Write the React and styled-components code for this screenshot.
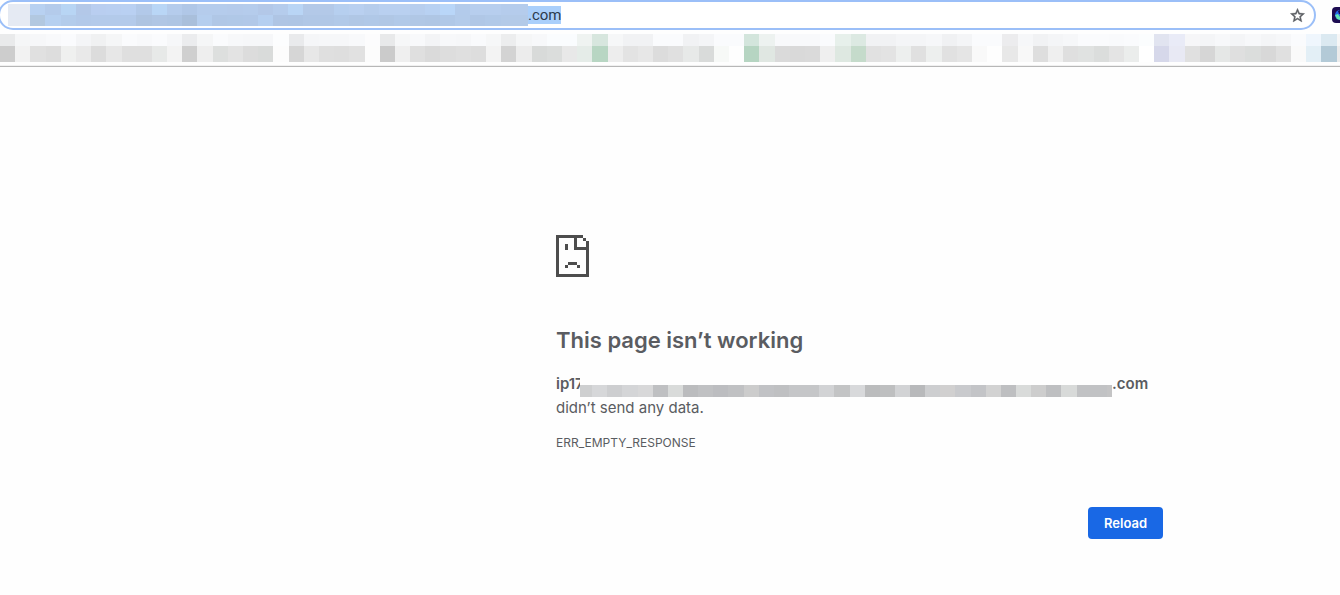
import React from 'react';
import styled, { createGlobalStyle } from 'styled-components';
import { MdStarBorder } from 'react-icons/md';

const GlobalStyle = createGlobalStyle`
  * {
    box-sizing: border-box;
  }

  body {
    margin: 0;
    overflow-x: hidden;
    background-color: #fefefe;
    font-family: Inter, 'Liberation Sans', sans-serif;
    color: #5a5c61;
  }
`;

const Toolbar = styled.header`
  display: flex;
  flex-direction: column;
  border-bottom: 1px solid #b7b7b7;
  box-shadow: inset 0 -1px 0 #f0f0f0;
  overflow: hidden;
`;

const AddressRow = styled.div`
  display: flex;
  align-items: center;
  height: 30px;
`;

const AddressBar = styled.div`
  flex: 1;
  display: flex;
  align-items: center;
  height: 30px;
  margin-left: -2px;
  padding: 0 8px;
  border: 2px solid #9bbff8;
  border-radius: 15px;
  background-color: #ffffff;
`;

const AddressInput = styled.input`
  width: 33px;
  height: 18px;
  margin-right: auto;
  padding: 0;
  border: none;
  outline: none;
  background-color: #aacffb;
  font-family: Roboto, 'Liberation Sans', sans-serif;
  font-size: 15px;
  line-height: 18px;
  color: #2c3a4d;
`;

const StarButton = styled.button`
  display: flex;
  padding: 0;
  border: none;
  background: none;
  font-size: 17px;
  color: #5a5d62;

  path:last-child {
    stroke: currentColor;
    stroke-width: 0.6;
  }
`;

const ExtensionButton = styled.button`
  display: flex;
  flex: none;
  width: 8px;
  height: 16px;
  margin-left: 16px;
  padding: 0;
  border: none;
  border-radius: 4px 0 0 4px;
  background-color: #1d0c52;
  overflow: hidden;
`;

const Mosaic = styled.div`
  flex: ${props => (props.$width ? 'none' : 1)};
  width: ${props => (props.$width ? props.$width + 'px' : 'auto')};
`;

const MosaicRow = styled.div`
  display: flex;
  height: ${props => props.$height}px;
`;

const Cell = styled.span`
  flex: ${props => props.$grow} 1 0;
  background-color: #${props => props.$color};
`;

const BookmarksBar = styled.nav`
  display: flex;
  padding: 4px 0;
`;

const Page = styled.main`
  display: grid;
  grid-template-columns: 556fr minmax(0, 607px) 177fr;
  padding: 168px 0 40px;
`;

const Content = styled.div`
  grid-column: 2;
`;

const SadPage = styled.svg`
  display: block;
  width: 33px;
  height: 42px;
`;

const Title = styled.h1`
  margin: 48px 0 17px;
  font-size: 22px;
  font-weight: 600;
  line-height: 30px;
`;

const Message = styled.p`
  margin: 0;
  font-size: 15px;
  line-height: 24px;
`;

const Host = styled.strong`
  display: flex;
  font-weight: 600;
`;

const HostStart = styled.span`
  width: 24px;
`;

const HostMask = styled.span`
  position: relative;
  display: flex;
  flex-direction: column;
  justify-content: flex-end;
  width: 532px;
  height: 25px;
  margin-bottom: -1px;
  background-color: #fefefe;
`;

const ErrorCode = styled.p`
  margin: 11px 0 0;
  font-size: 12px;
  line-height: 24px;
`;

const Actions = styled.div`
  display: flex;
  justify-content: flex-end;
  margin-top: 52px;
`;

const ReloadButton = styled.button`
  width: 75px;
  height: 32px;
  padding: 0;
  border: none;
  border-radius: 4px;
  background-color: #1968e5;
  font-family: inherit;
  font-size: 13px;
  font-weight: 600;
  color: #ffffff;
  cursor: pointer;
`;

const bookmarksTop = `
  e9eaeb f5f6f7 f6f7f9 f8f9fb fafbfd f4f5f7 f0f1f2 f5f6f7 fafbfd f8f9fb fafbfd
  f6f7f9 ebecee f5f6f7 fafbfd f7f8fa f6f7f9 f6f7f9 fcfdfe e9eaec f5f6f8 f6f7f9
  f6f7f9 f8f9fb fcfcfd e8e9ea f6f7f8 f8f9fb f3f4f6 f7f8fa f6f7f9 f9fafc f6f7f8
  ecedee f5f6f7 f7f8fa fafcfe fafcfe eff3f1 d7e6de f6f7f8 f1f2f4 f1f2f4 fafbfd
  fafbfd f1f2f4 f4f5f7 fafbfd fafbfd d3e5dc edf2f0 f8f9fb f8f9fb f8f9fb fafbfd
  e7f0eb dce9e2 f1f2f4 f1f2f4 f4f5f7 f4f5f7 f6f7f9 f0f1f3 f4f5f7 fafbfd fafbfd
  ececee f6f7f9 f1f2f4 f4f5f7 f6f7f9 fafbfd fafbfd f9fafc fafbfd fbfdfe e1e4f0
  e9ebf7 f6f6f8 f4f5f7 f7f8fa f4f5f7 f7f8fa f4f5f7 f6f7f9 fafbfd eff6fd dbe9f1
  f6f6f6`;

const bookmarksBottom = `
  cdcdcd f2f2f2 e0e0e0 dddddd eff0ef e9e9e9 dcdcdc e7e7e7 dfdfdf dfdfdf e7e9e8
  f3f3f3 cfcfcf eeeeee dddfde e3e3e3 dcdcdc d9dbda fcfcfc d6d6d6 e7e7e7 dfdfdf
  dedede e1e1e1 fcfcfc cbcbcb efefef dfdfdf dadada dddddd dfdfdf dddddd f3f3f3
  d3d3d3 ececec d8dad9 dbdddc e8e8e8 e5ece8 b8d6c3 ededed e3e3e3 e7e7e7 dcdcdc
  e0e0e0 e7e9e8 d9dbda f7f9f7 fefefe b6d5c2 e0e7e2 dadada d9d9d9 dadada efefef
  dee8e1 c5dbcb e1e1e1 e3e3e3 edefee e0e0e0 edefee e1e1e1 e5e5e5 f9f9f9 fefefe
  e8e8e8 f8f8f8 dedede efefef dfdfdf e0e2e1 dbdddc e4e4e4 ebedec ffffff d6d8ea
  e8e9f4 e0e0e0 d6d6d6 e5e7e6 dfdfdf dbdddc d8d8d8 e0e0e0 fafafa e3eff6 b3cad7
  ebebeb`;

const addressTop = `
  e5eaf3 b8d1f1 b4cbeb b8d5f4 b3c8e8 b9cef0 b9cff1 b9d0f2 b2c9e9 b9d6f6 b5ccec
  b0c7e7 b5ccec b5ccec b5cbeb b5ccec b3c8e8 b5ccec b9d5f5 b3c9e8 b3c9e8 b6cfef
  b9d0f0 b6cdec b9d0f0 b9d0f0 b7ceee b8d1f2 b9d6f8 b3cbeb b7ceee b7ceee b5ccec
  b5ccec`;

const addressBottom = `
  e5eaf3 b2c8e0 b6d0f0 b3cceb b2c9e9 b3caea b3caea b3caea aec4e1 b0c6e4 aec5e3
  a9bfdb b5ceee b0c7e6 b0c8e7 b1c8e8 b5cff0 afc5e4 aec5e4 b0c7e6 b0c7e6 b1c9e8
  b0c7e5 b0c8e7 b0c7e5 b1c9e8 b0c7e5 afc6e4 b0c8e7 b3cbea b0c7e6 b1c9e8 b3cae8
  b3cae8`;

const hostCells = `
  cecfd0 d6d7d9 cdced0 d4d5d7 d8d8d9 bfc0c2 d9dbda bbbcbe c0c1c3 bcbdc0 c0c1c3
  cccccc c1c2c5 bfc0c2 c5c6c8 c5c6c8 d2d3d5 c3c4c5 d8d9db bbbcbd bebfc0 d2d3d5
  b8b9bb cdced0 d1d0d0 c9cacd c3c4c7 d2d2d2 bebfc1 d9dbda cdcdcd bebfc1 d8dad9
  c1c2c4 c1c2c4 c4c4c5`;

// first and last are the widths of the end cells, all others are 15 wide
const CellRow = ({ colors, height, first = 15, last = 15 }) => {
  const list = colors.trim().split(/\s+/);
  const growOf = (index) => {
    if (index === 0) return first;
    return index === list.length - 1 ? last : 15;
  };

  return (
    <MosaicRow $height={height}>
      {list.map((color, index) => (
        <Cell key={index} $color={color} $grow={growOf(index)} />
      ))}
    </MosaicRow>
  );
};

const ExtensionIcon = () => (
  <svg width="8" height="16" viewBox="0 0 8 16" aria-hidden="true">
    <circle cx="8" cy="8" r="5" fill="#2468e8" />
    <path d="M3 8 L6 7 L8 10 L8 13 L5 12 Z" fill="#62e6b4" />
    <path d="M6 4 L8 3 V7 L7 7 Z" fill="#1d0c52" />
  </svg>
);

const App = () => {
  const handleReload = () => {
    window.location.reload();
  };

  return (
    <>
      <GlobalStyle />
      <Toolbar>
        <AddressRow>
          <AddressBar>
            <Mosaic $width={520}>
              <CellRow colors={addressTop} height={11} first={22} last={12} />
              <CellRow colors={addressBottom} height={11} first={22} last={12} />
            </Mosaic>
            <AddressInput type="text" aria-label="Address" defaultValue=".com" />
            <StarButton type="button" aria-label="Bookmark this page">
              <MdStarBorder />
            </StarButton>
          </AddressBar>
          <ExtensionButton type="button" aria-label="Extension">
            <ExtensionIcon />
          </ExtensionButton>
        </AddressRow>
        <BookmarksBar aria-label="Bookmarks">
          <Mosaic>
            <CellRow colors={bookmarksTop} height={12} last={4} />
            <CellRow colors={bookmarksBottom} height={16} last={4} />
          </Mosaic>
        </BookmarksBar>
      </Toolbar>
      <Page>
        <Content>
          <SadPage viewBox="0 0 11 14" shapeRendering="crispEdges" aria-hidden="true">
            <path
              fill="#4d4d4d"
              d="M0 0H9V1H7V4H10V2H11V14H0ZM1 1V13H10V5H6V1ZM9 1H10V2H9ZM3 3H4V5H3ZM4 9H7V10H4ZM3 10H4V11H3ZM7 10H8V11H7Z"
              fillRule="evenodd"
            />
          </SadPage>
          <Title>This page isn’t working</Title>
          <Message>
            <Host>
              <HostStart>ip17</HostStart>
              <HostMask>
                <CellRow colors={hostCells} height={12} first={12} last={5} />
              </HostMask>
              <span>.com</span>
            </Host>
            didn’t send any data.
          </Message>
          <ErrorCode>ERR_EMPTY_RESPONSE</ErrorCode>
          <Actions>
            <ReloadButton type="button" onClick={handleReload}>Reload</ReloadButton>
          </Actions>
        </Content>
      </Page>
    </>
  );
};

export default App;
